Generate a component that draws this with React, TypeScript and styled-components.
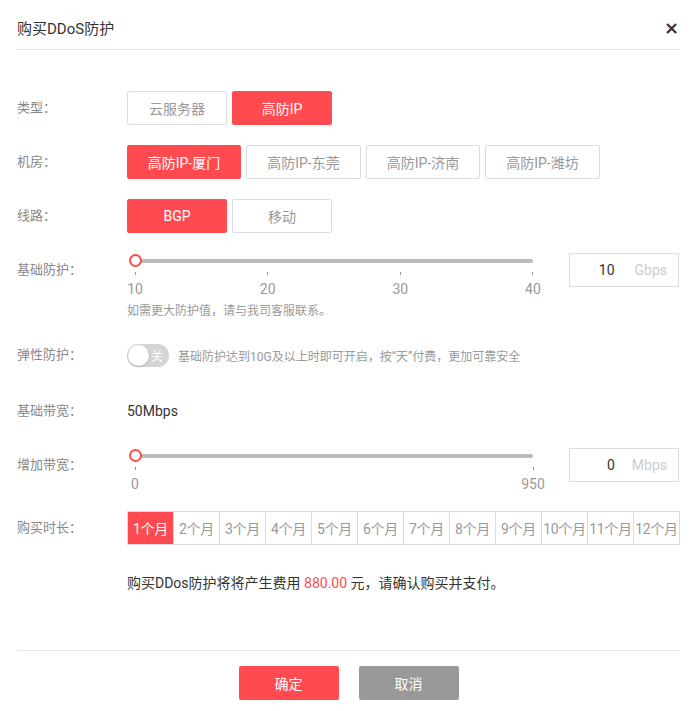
import React, { useState } from 'react';
import styled, { createGlobalStyle } from 'styled-components';

const GlobalStyle = createGlobalStyle`
  html, body {
    margin: 0;
    padding: 0;
    background: #fff;
  }
  body {
    font-family: Roboto, "Noto Sans CJK SC", sans-serif;
    color: #333;
  }
`;

const RED = '#ff4b4f';

const Dialog = styled.div`
  width: 691px;
  box-sizing: border-box;
  padding: 0 11px 0 17px;
`;

const Header = styled.div`
  height: 50px;
  display: flex;
  align-items: center;
  justify-content: space-between;
  padding-top: 6px;
  box-sizing: border-box;
  border-bottom: 1px solid #e3e3e3;
`;

const Title = styled.div`
  font-size: 15px;
  color: #333;
`;

const Close = styled.button`
  border: none;
  background: none;
  padding: 0 1px 0 0;
  font-size: 18px;
  font-weight: bold;
  color: #333;
  cursor: pointer;
  line-height: 1;
  font-family: "DejaVu Sans", sans-serif;
`;

const Body = styled.div`
  padding-top: 41px;
`;

const Row = styled.div<{ $gap?: number }>`
  display: flex;
  align-items: flex-start;
  margin-bottom: ${p => p.$gap ?? 20}px;
`;

const Label = styled.div`
  width: 110px;
  flex: none;
  font-size: 13px;
  line-height: 34px;
  color: #888;
`;

const Options = styled.div`
  display: flex;
  gap: 5px;
`;

const Option = styled.button<{ $active?: boolean; $w: number }>`
  width: ${p => p.$w}px;
  height: 34px;
  box-sizing: border-box;
  border: 1px solid ${p => (p.$active ? RED : '#ddd')};
  background: ${p => (p.$active ? RED : '#fff')};
  color: ${p => (p.$active ? '#fff' : '#999')};
  border-radius: 2px;
  font-size: 14px;
  font-family: inherit;
  padding: 0;
  cursor: pointer;
`;

const SliderWrap = styled.div`
  display: flex;
  align-items: flex-start;
  gap: 36px;
`;

const SliderBlock = styled.div`
  padding-left: 8px;
  width: 398px;
`;

const TrackArea = styled.div`
  position: relative;
  height: 16px;
  display: flex;
  align-items: center;
`;

const Track = styled.div`
  flex: 1;
  height: 4px;
  border-radius: 2px;
  background: #bbb;
`;

const Thumb = styled.div`
  position: absolute;
  left: -6px;
  top: 1px;
  width: 9px;
  height: 9px;
  border: 2px solid ${RED};
  border-radius: 50%;
  background: #fff;
`;

const Ticks = styled.div`
  display: flex;
  justify-content: space-between;
  height: 29px;
`;

const Mark = styled.div`
  width: 0;
  display: flex;
  flex-direction: column;
  align-items: center;
`;

const Tick = styled.div`
  width: 1px;
  height: 4px;
  margin-top: 3px;
  background: #999;
`;

const MarkLabel = styled.div`
  margin-top: 5px;
  font-size: 14px;
  line-height: 18px;
  color: #999;
  white-space: nowrap;
`;

const Help = styled.div`
  margin: 4px 0 0 -8px;
  font-size: 12px;
  line-height: 18px;
  color: #999;
`;

const ValueBox = styled.div`
  width: 110px;
  height: 34px;
  box-sizing: border-box;
  border: 1px solid #ddd;
  display: flex;
  align-items: center;
  font-size: 14px;
`;

const Value = styled.span`
  flex: 1;
  text-align: right;
  color: #333;
`;

const Unit = styled.span<{ $pad: number }>`
  color: #ccc;
  padding: 0 11px 0 ${p => p.$pad}px;
`;

const SwitchLine = styled.div`
  display: flex;
  align-items: center;
  height: 34px;
  gap: 9px;
`;

const Switch = styled.div`
  width: 42px;
  height: 23px;
  border-radius: 12px;
  background: #d4d4d4;
  display: flex;
  align-items: center;
  justify-content: flex-end;
  position: relative;
  box-sizing: border-box;
  padding-right: 6px;
  font-size: 12px;
  color: #fff;
`;

const Knob = styled.div`
  position: absolute;
  left: 1px;
  top: 1px;
  width: 21px;
  height: 21px;
  border-radius: 50%;
  background: #fff;
  box-shadow: 0 1px 2px rgba(0, 0, 0, 0.2);
`;

const Note = styled.span`
  font-size: 12px;
  color: #999;
`;

const Plain = styled.div`
  font-size: 14px;
  line-height: 34px;
  color: #333;
`;

const Months = styled.div`
  display: flex;
  border: 1px solid #ddd;
  border-right: none;
`;

const Month = styled.div<{ $active?: boolean }>`
  width: 46px;
  height: 32px;
  box-sizing: border-box;
  border-right: 1px solid #ddd;
  display: flex;
  align-items: center;
  justify-content: center;
  font-size: 14px;
  letter-spacing: -0.3px;
  white-space: nowrap;
  background: ${p => (p.$active ? RED : '#fff')};
  color: ${p => (p.$active ? '#fff' : '#999')};
  cursor: pointer;
`;

const Summary = styled.div`
  padding: 28px 0 0 110px;
  font-size: 14px;
  line-height: 20px;
  color: #333;
`;

const Price = styled.span`
  color: ${RED};
`;

const Footer = styled.div`
  margin-top: 57px;
  border-top: 1px solid #e3e3e3;
  padding-top: 15px;
  display: flex;
  justify-content: center;
  gap: 20px;
`;

const Action = styled.button<{ $primary?: boolean }>`
  width: 100px;
  height: 34px;
  border: none;
  border-radius: 2px;
  background: ${p => (p.$primary ? RED : '#999')};
  color: #fff;
  font-size: 14px;
  font-family: inherit;
  cursor: pointer;
`;

const rooms = ['高防IP-厦门', '高防IP-东莞', '高防IP-济南', '高防IP-潍坊'];
const roomWidths = [114, 115, 114, 115];

const Slider = ({ marks, help }: { marks: number[]; help?: string }) => (
  <SliderBlock>
    <TrackArea>
      <Track />
      <Thumb />
    </TrackArea>
    <Ticks>
      {marks.map(m => (
        <Mark key={m}>
          <Tick />
          <MarkLabel>{m}</MarkLabel>
        </Mark>
      ))}
    </Ticks>
    {help && <Help>{help}</Help>}
  </SliderBlock>
);

export default function App() {
  const [type, setType] = useState(1);
  const [room, setRoom] = useState(0);
  const [line, setLine] = useState(0);
  const [month, setMonth] = useState(1);

  return (
    <Dialog>
      <GlobalStyle />
      <Header>
        <Title>购买DDoS防护</Title>
        <Close>×</Close>
      </Header>
      <Body>
        <Row>
          <Label>类型：</Label>
          <Options>
            {['云服务器', '高防IP'].map((t, i) => (
              <Option key={t} $w={100} $active={type === i} onClick={() => setType(i)}>
                {t}
              </Option>
            ))}
          </Options>
        </Row>
        <Row>
          <Label>机房：</Label>
          <Options>
            {rooms.map((r, i) => (
              <Option key={r} $w={roomWidths[i]} $active={room === i} onClick={() => setRoom(i)}>
                {r}
              </Option>
            ))}
          </Options>
        </Row>
        <Row>
          <Label>线路：</Label>
          <Options>
            {['BGP', '移动'].map((t, i) => (
              <Option key={t} $w={100} $active={line === i} onClick={() => setLine(i)}>
                {t}
              </Option>
            ))}
          </Options>
        </Row>
        <Row $gap={18}>
          <Label>基础防护：</Label>
          <SliderWrap>
            <Slider marks={[10, 20, 30, 40]} help="如需更大防护值，请与我司客服联系。" />
            <ValueBox>
              <Value>10</Value>
              <Unit $pad={20}>Gbps</Unit>
            </ValueBox>
          </SliderWrap>
        </Row>
        <Row $gap={22}>
          <Label>弹性防护：</Label>
          <SwitchLine>
            <Switch>
              <Knob />关
            </Switch>
            <Note>基础防护达到10G及以上时即可开启，按“天”付费，更加可靠安全</Note>
          </SwitchLine>
        </Row>
        <Row $gap={20}>
          <Label>基础带宽：</Label>
          <Plain>50Mbps</Plain>
        </Row>
        <Row $gap={18}>
          <Label>增加带宽：</Label>
          <SliderWrap>
            <Slider marks={[0, 950]} />
            <ValueBox>
              <Value>0</Value>
              <Unit $pad={17}>Mbps</Unit>
            </ValueBox>
          </SliderWrap>
        </Row>
        <Row $gap={0}>
          <Label>购买时长：</Label>
          <Months>
            {Array.from({ length: 12 }, (_, i) => i + 1).map(m => (
              <Month key={m} $active={month === m} onClick={() => setMonth(m)}>
                {m}个月
              </Month>
            ))}
          </Months>
        </Row>
        <Summary>
          购买DDos防护将将产生费用 <Price>880.00</Price> 元，请确认购买并支付。
        </Summary>
      </Body>
      <Footer>
        <Action $primary>确定</Action>
        <Action>取消</Action>
      </Footer>
    </Dialog>
  );
}
